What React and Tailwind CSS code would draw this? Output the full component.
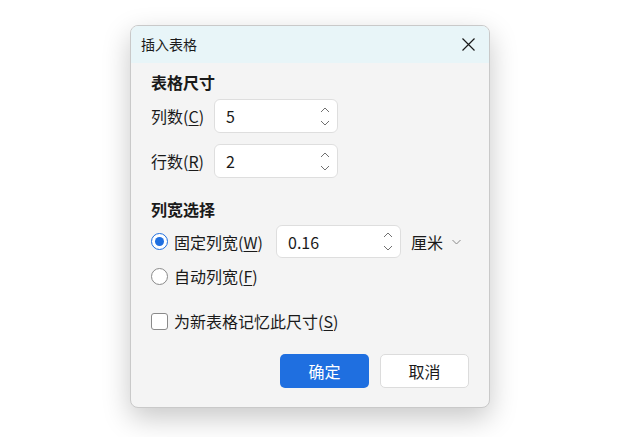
import React from "react";

const font = { fontFamily: '"Noto Sans CJK SC", "Noto Sans", sans-serif' };

function Spinner() {
  return (
    <div className="flex flex-col items-center gap-[7px] mr-[7px]">
      <svg width="10" height="6" viewBox="0 0 10 6" fill="none">
        <path d="M1 5L5 1L9 5" stroke="#707070" strokeWidth="1" />
      </svg>
      <svg width="10" height="6" viewBox="0 0 10 6" fill="none">
        <path d="M1 1L5 5L9 1" stroke="#707070" strokeWidth="1" />
      </svg>
    </div>
  );
}

function NumInput({ value, w, h }) {
  return (
    <div
      className={`flex items-center justify-between bg-white border border-[#dedede] rounded-[6px] pl-[11px] ${w} ${h}`}
    >
      <span className="text-[16px] text-[#1a1a1a] leading-none">{value}</span>
      <Spinner />
    </div>
  );
}

export default function App() {
  return (
    <div className="w-[622px] h-[437px] bg-white overflow-hidden pt-[25px]" style={font}>
      <div className="ml-[130px] w-[360px] h-[383px] rounded-[8px] border border-[#c9c9c9] bg-[#f4f4f4] overflow-hidden shadow-[0_10px_28px_rgba(0,0,0,0.22)] flex flex-col">
        <div className="h-[37px] flex items-center justify-between pl-[10px] pr-[14px] bg-[#e8f5f8]">
          <span className="text-[14px] text-[#1a1a1a]">插入表格</span>
          <svg width="13" height="13" viewBox="0 0 13 13" fill="none">
            <path d="M0.5 0.5L12.5 12.5M12.5 0.5L0.5 12.5" stroke="#1a1a1a" strokeWidth="1.2" />
          </svg>
        </div>
        <div className="flex flex-col pl-[20px] pr-[20px] text-[#1a1a1a]">
          <div className="mt-[7px] h-[24px] flex items-center text-[16px] font-bold">表格尺寸</div>
          <div className="mt-[5px] flex items-center">
            <span className="w-[63px] text-[16px]">
              列数(<span className="underline underline-offset-2">C</span>)
            </span>
            <NumInput value="5" w="w-[124px]" h="h-[34px]" />
          </div>
          <div className="mt-[11px] flex items-center">
            <span className="w-[63px] text-[16px]">
              行数(<span className="underline underline-offset-2">R</span>)
            </span>
            <NumInput value="2" w="w-[124px]" h="h-[34px]" />
          </div>
          <div className="mt-[19px] h-[24px] flex items-center text-[16px] font-bold">列宽选择</div>
          <div className="mt-[4px] flex items-center">
            <span className="w-[17px] h-[17px] rounded-full border-[1.5px] border-[#1f6fe0] flex items-center justify-center bg-white">
              <span className="w-[9px] h-[9px] rounded-full bg-[#1f6fe0]" />
            </span>
            <span className="ml-[6px] w-[102px] text-[16px]">
              固定列宽(<span className="underline underline-offset-2">W</span>)
            </span>
            <NumInput value="0.16" w="w-[125px]" h="h-[33px]" />
            <span className="ml-[10px] text-[16px]">厘米</span>
            <svg className="ml-[9px]" width="9" height="6" viewBox="0 0 9 6" fill="none">
              <path d="M0.5 1L4.5 5L8.5 1" stroke="#8a8a8a" strokeWidth="1" />
            </svg>
          </div>
          <div className="mt-[6px] h-[24px] flex items-center">
            <span className="w-[17px] h-[17px] rounded-full border border-[#8a8a8a] bg-white" />
            <span className="ml-[6px] text-[16px]">
              自动列宽(<span className="underline underline-offset-2">F</span>)
            </span>
          </div>
          <div className="mt-[21px] h-[24px] flex items-center">
            <span className="w-[17px] h-[17px] rounded-[3px] border border-[#8a8a8a] bg-white" />
            <span className="ml-[6px] text-[16px]">
              为新表格记忆此尺寸(<span className="underline underline-offset-2">S</span>)
            </span>
          </div>
          <div className="mt-[21px] flex justify-end gap-[11px]">
            <button className="w-[89px] h-[34px] rounded-[5px] bg-[#1f6fe0] text-white text-[16px]">确定</button>
            <button className="w-[89px] h-[34px] rounded-[5px] bg-white border border-[#dcdcdc] text-[#1a1a1a] text-[16px]">取消</button>
          </div>
        </div>
      </div>
    </div>
  );
}
